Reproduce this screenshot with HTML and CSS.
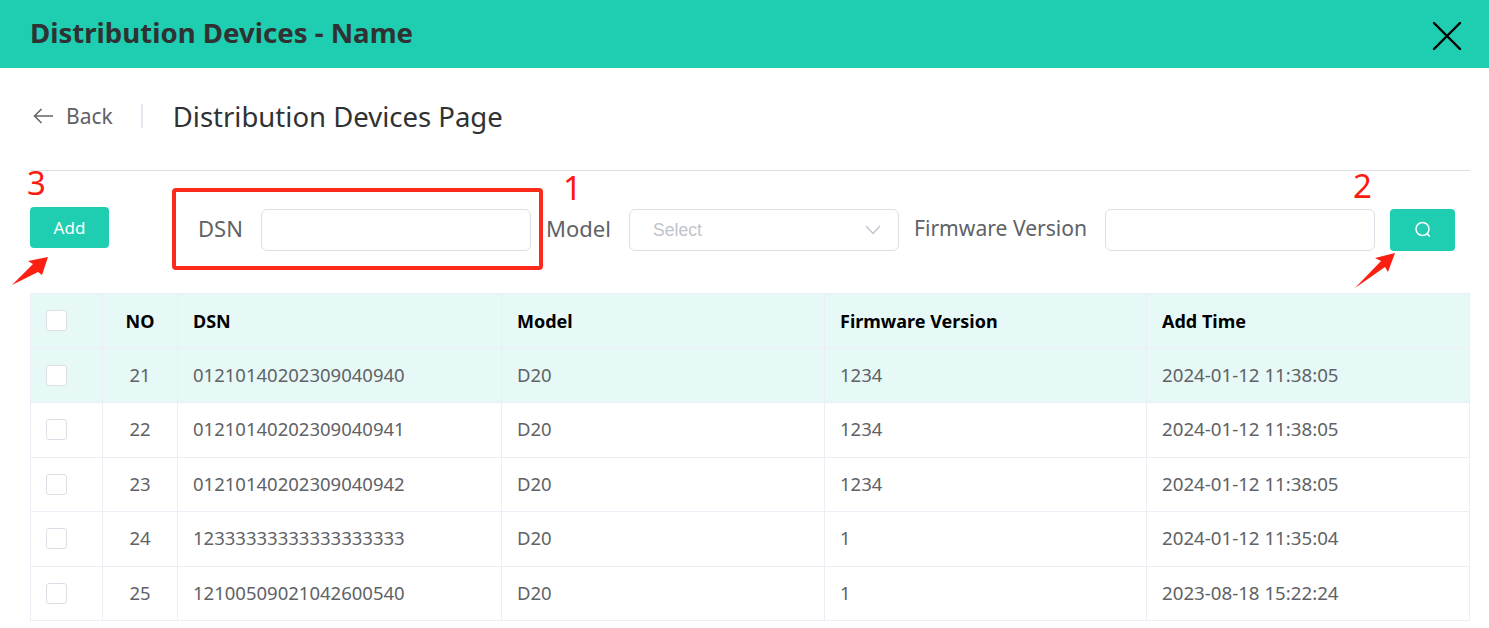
FILE: index.html
```html
<!doctype html>
<html lang="en">
 <head>
  <meta charset="UTF-8">
  <title>Distribution Devices</title>
  <link rel="stylesheet" href="styles.css">
 </head>
 <body>
  <header class="topbar">
   <h1 class="topbar-title">Distribution Devices - Name</h1>
   <svg class="close-icon" width="30" height="30" viewBox="0 0 30 30"><path d="M2 2 L28 28 M28 2 L2 28" stroke="#000" stroke-width="2.4" stroke-linecap="round" fill="none"/></svg>
  </header>

  <div class="page-head">
   <div class="back">
    <svg width="20" height="16" viewBox="0 0 20 16"><path d="M20 8 H1.5 M8.5 1 L1.5 8 L8.5 15" stroke="#666" stroke-width="1.6" fill="none"/></svg>
    <span>Back</span>
   </div>
   <i class="back-sep"></i>
   <h2 class="page-title">Distribution Devices Page</h2>
  </div>

  <div class="toolbar">
   <button class="btn btn-add">Add</button>
   <label class="field-label label-dsn">DSN</label>
   <div class="input"></div>
   <label class="field-label label-model">Model</label>
   <div class="input select">
    <span>Select</span>
    <svg width="16" height="10" viewBox="0 0 16 10"><path d="M1 1 L8 8.5 L15 1" stroke="#c0c4cc" stroke-width="1.3" fill="none"/></svg>
   </div>
   <label class="field-label label-fw">Firmware Version</label>
   <div class="input"></div>
   <button class="btn btn-search">
    <svg width="18" height="18" viewBox="0 0 18 18"><circle cx="8.5" cy="8" r="6.5" stroke="#fff" stroke-width="1.5" fill="none"/><path d="M13 12.5 L15.7 15.5" stroke="#fff" stroke-width="1.5" fill="none"/></svg>
   </button>
  </div>

  <table class="grid">
   <colgroup>
    <col class="col-check"><col class="col-no"><col class="col-dsn"><col class="col-model"><col class="col-fw"><col class="col-time">
   </colgroup>
   <thead>
    <tr><th class="cell-check"><i class="check"></i></th><th class="center">NO</th><th>DSN</th><th>Model</th><th>Firmware Version</th><th>Add Time</th></tr>
   </thead>
   <tbody>
    <tr class="hover"><td class="cell-check"><i class="check"></i></td><td class="center">21</td><td>01210140202309040940</td><td>D20</td><td>1234</td><td class="cell-time">2024-01-12 11:38:05</td></tr>
    <tr><td class="cell-check"><i class="check"></i></td><td class="center">22</td><td>01210140202309040941</td><td>D20</td><td>1234</td><td class="cell-time">2024-01-12 11:38:05</td></tr>
    <tr><td class="cell-check"><i class="check"></i></td><td class="center">23</td><td>01210140202309040942</td><td>D20</td><td>1234</td><td class="cell-time">2024-01-12 11:38:05</td></tr>
    <tr><td class="cell-check"><i class="check"></i></td><td class="center">24</td><td>12333333333333333333</td><td>D20</td><td>1</td><td class="cell-time">2024-01-12 11:35:04</td></tr>
    <tr><td class="cell-check"><i class="check"></i></td><td class="center">25</td><td>12100509021042600540</td><td>D20</td><td>1</td><td class="cell-time">2023-08-18 15:22:24</td></tr>
   </tbody>
  </table>

  <!-- annotations drawn over the screenshot -->
  <div class="mark-box"></div>
  <span class="mark-num num-1">1</span>
  <span class="mark-num num-2">2</span>
  <span class="mark-num num-3">3</span>
  <svg class="arrow arrow-add" width="40" height="32" viewBox="0 0 40 32"><path d="M0 30 L21 9 L16 6 L36 2 L30 20 L26 17 Z" fill="#fb1f12"/></svg>
  <svg class="arrow arrow-search" width="42" height="38" viewBox="0 0 42 38"><path d="M0 37 L26 10 L20 7 L40 2 L33 21 L30 16 Z" fill="#fb1f12"/></svg>
 </body>
</html>
```

FILE: styles.css
```css
* {
	margin: 0;
	padding: 0;
	box-sizing: border-box;
}

body {
	position: relative;
	height: 628px;
	overflow: hidden;
	background: #fff;
	font-family: "Noto Sans", "Noto Sans CJK SC", sans-serif;
	color: #606266;
}

.topbar {
	height: 68px;
	padding: 0 30px 4px;
	background: #1fceb0;
	display: flex;
	align-items: center;
	justify-content: space-between;
}

.topbar-title {
	font-size: 27.6px;
	font-weight: 700;
	color: #303133;
}

.close-icon {
	margin: 8px -3px 0 0;
}

.page-head {
	height: 103px;
	margin: 0 19px 0 30px;
	padding-bottom: 6px;
	border-bottom: 1px solid #dcdfe6;
	display: flex;
	align-items: center;
}

.back {
	display: flex;
	align-items: center;
	gap: 13px;
	padding-left: 3px;
	font-size: 21px;
}

.back-sep {
	width: 2px;
	height: 24px;
	margin: 0 30px 0 28px;
	background: #e4e7ed;
}

.page-title {
	font-size: 27.5px;
	font-weight: 400;
	color: #303133;
}

.toolbar {
	height: 122px;
	padding: 36px 0 0 30px;
	display: flex;
	align-items: flex-start;
}

.btn {
	border: 0;
	border-radius: 4px;
	background: #1fceb0;
	color: #fff;
	font: inherit;
	display: flex;
	align-items: center;
	justify-content: center;
}

.btn-add {
	width: 79px;
	height: 41px;
	font-size: 17px;
}

.btn-search {
	width: 65px;
	height: 42px;
	margin: 2px 0 0 15px;
}

.field-label {
	height: 42px;
	margin-top: 2px;
	font-size: 22px;
	line-height: 38px;
}

.label-dsn {
	margin-left: 89px;
	width: 63px;
}

.label-model {
	margin-left: 15px;
	width: 83px;
}

.label-fw {
	margin-left: 15px;
	width: 191px;
	font-size: 21.1px;
}

.input {
	width: 270px;
	height: 42px;
	margin-top: 2px;
	border: 1px solid #dcdfe6;
	border-radius: 6px;
	background: #fff;
}

.select {
	padding: 0 17px 0 23px;
	display: flex;
	align-items: center;
	justify-content: space-between;
	color: #c0c4cc;
	font-family: "Liberation Sans", sans-serif;
	font-size: 17.6px;
}

.grid {
	width: 1440px;
	margin-left: 30px;
	table-layout: fixed;
	border-collapse: collapse;
	font-size: 18.5px;
}

.col-check { width: 72px; }
.col-no { width: 75px; }
.col-dsn { width: 324px; }
.col-model { width: 323px; }
.col-fw { width: 322px; }

.grid th, .grid td {
	border: 1px solid #ebeef5;
	padding: 0 15px 2px;
	text-align: left;
	vertical-align: middle;
}

.grid th {
	height: 54.5px;
	padding-bottom: 0;
	background: #e7f9f7;
	color: #000;
	font-size: 18px;
	font-weight: 700;
}

.grid td {
	height: 54.5px;
}

.grid .cell-time {
	font-size: 18.7px;
}

.grid .cell-check {
	padding-bottom: 0;
}

.grid tr.hover td {
	background: #e7f9f7;
}

.grid .center {
	text-align: center;
}

.check {
	display: block;
	width: 21px;
	height: 21px;
	border: 1px solid #dcdfe6;
	border-radius: 3px;
	background: #fff;
}

.mark-box {
	position: absolute;
	left: 172px;
	top: 188px;
	width: 371px;
	height: 82px;
	border: 4px solid #fb2a1a;
	border-radius: 4px;
}

.mark-num {
	position: absolute;
	color: #fb1a10;
	font-size: 33px;
	line-height: 36px;
}

.num-1 { left: 563px; top: 170px; }
.num-2 { left: 1353px; top: 168px; }
.num-3 { left: 27px; top: 165px; }

.arrow {
	position: absolute;
}

.arrow-add { left: 12px; top: 255px; }
.arrow-search { left: 1355px; top: 251px; }
```
